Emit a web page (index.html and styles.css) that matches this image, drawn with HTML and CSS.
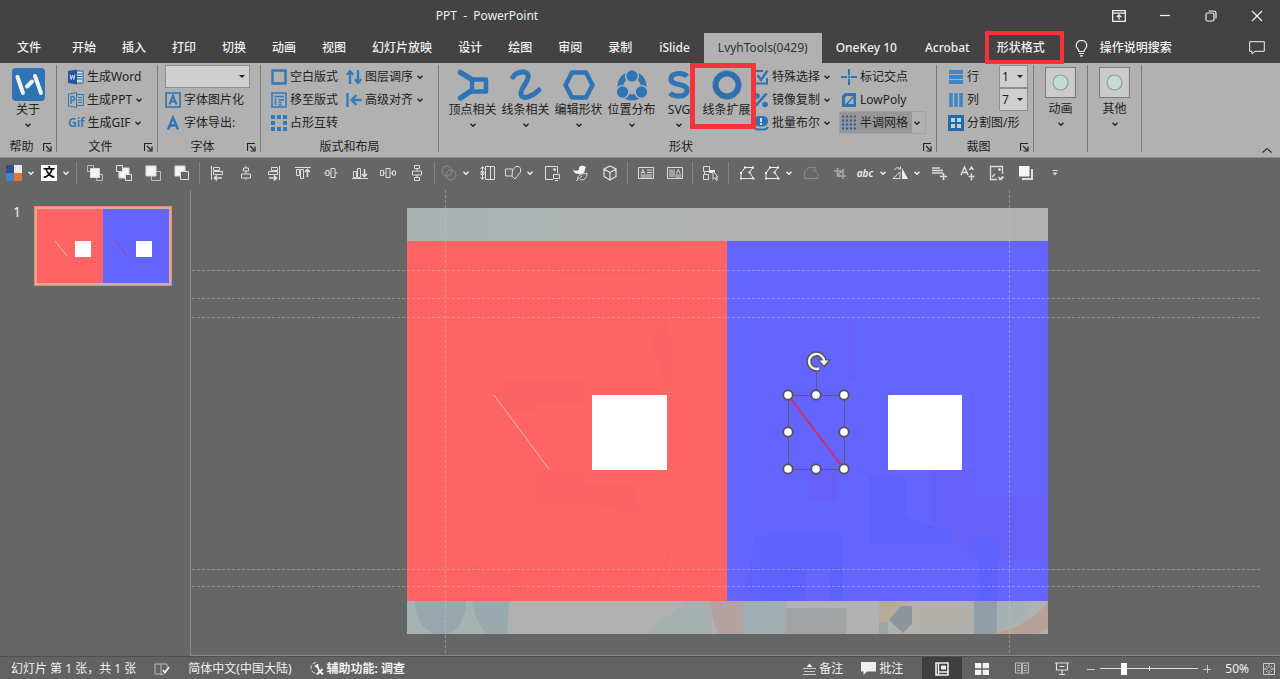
FILE: index.html
```html
<!DOCTYPE html>
<html lang="zh-CN">
  <head>
    <meta charset="UTF-8" />
    <meta name="viewport" content="width=device-width, initial-scale=1.0" />
    <title>PPT - PowerPoint</title>
    <link rel="stylesheet" href="styles.css" />
  </head>
  <body>
    <svg class="sprite" width="0" height="0" aria-hidden="true">
      <symbol id="caret" viewBox="0 0 8 8"><path d="M1.5 2.8 4 5.2l2.5-2.4" fill="none" stroke="currentColor" stroke-width="1.4" /></symbol>
      <symbol id="launcher" viewBox="0 0 9 9"><path d="M.5 8V.5H8M3 3l4 4M8 3.5V8H3.5" fill="none" stroke="currentColor" stroke-width="1.2" /></symbol>
      <symbol id="freeform" viewBox="0 0 16 16"><path d="M2 13.500V8l4-5.500h8L10.500 7l4 6.500z" fill="none" stroke="currentColor" /><path d="M1 12.500h2v2H1zM13 1.500h2v2h-2zM5 1.500h2v2H5zM13.500 12.500h2v2h-2zM1 7h2v2H1zM9.500 6.500h2v2h-2z" fill="currentColor" stroke="none" /></symbol>
      <symbol id="preview" viewBox="0 0 29 29"><path d="M.5.500h28v28H.5z" fill="#cbcbcb" stroke="#7c7c7c" /><circle cx="14.500" cy="14.500" r="7" fill="#c2dcd3" stroke="#7fa497" /></symbol>
    </svg>

    <header>
      <div class="title-bar">
        <h1>PPT&nbsp; -&nbsp; PowerPoint</h1>
        <div class="window-buttons">
          <button aria-label="功能区显示选项"><svg width="14" height="12" viewBox="0 0 14 12"><path d="M.7.700h12.600v10.600H.7zM.7 3.200h12.600M7 9.800V5M4.800 7 7 4.800 9.200 7" fill="none" stroke="currentColor" stroke-width="1.300" /></svg></button>
          <button aria-label="最小化"><svg width="12" height="12" viewBox="0 0 12 12"><path d="M1 5.500h10" stroke="currentColor" stroke-width="1.200" /></svg></button>
          <button aria-label="还原"><svg width="12" height="12" viewBox="0 0 12 12"><rect x="1" y="3" width="8" height="8" rx="1.500" fill="none" stroke="currentColor" stroke-width="1.200" /><path d="M3.500 1h5A2.500 2.500 0 0 1 11 3.500v5" fill="none" stroke="currentColor" stroke-width="1.200" /></svg></button>
          <button aria-label="关闭"><svg width="12" height="12" viewBox="0 0 12 12"><path d="m1 1 10 10M11 1 1 11" stroke="currentColor" stroke-width="1.200" /></svg></button>
        </div>
      </div>

      <nav class="tabs">
        <a href="#" class="tab-file">文件</a>
        <a href="#">开始</a>
        <a href="#">插入</a>
        <a href="#">打印</a>
        <a href="#">切换</a>
        <a href="#">动画</a>
        <a href="#">视图</a>
        <a href="#">幻灯片放映</a>
        <a href="#">设计</a>
        <a href="#">绘图</a>
        <a href="#">审阅</a>
        <a href="#">录制</a>
        <a href="#" class="tab-addin">iSlide</a>
        <a href="#" class="tab-addin active">LvyhTools(0429)</a>
        <a href="#" class="tab-addin">OneKey 10</a>
        <a href="#" class="tab-addin">Acrobat</a>
        <a href="#" class="tab-format">形状格式</a>
        <button class="search">
          <svg width="13" height="17" viewBox="0 0 13 17"><path d="M4 11.500C4 9 1.200 8.500 1.200 5.500a5.200 5 0 0 1 10.600 0C11.800 8.500 9 9 9 11.500zM4 13.500h5M5 15.800h3" fill="none" stroke="currentColor" stroke-width="1.200" /></svg>
          操作说明搜索
        </button>
        <button class="comment" aria-label="批注"><svg width="16" height="14" viewBox="0 0 16 14"><path d="M.7.700h14.600v9.600H6L3 13v-2.700H.7z" fill="none" stroke="currentColor" /></svg></button>
      </nav>
    </header>

    <section class="ribbon">
      <div class="group group-help">
        <div class="group-body">
          <button class="big">
            <svg width="33" height="33" viewBox="0 0 33 33"><rect width="33" height="33" rx="4" fill="#2e73b3" /><path d="m5.500 9 5.500 16M23 8l6 17M15 18.500l5-5" stroke="#f1f1f1" stroke-width="4" stroke-linecap="round" /></svg>
            <span>关于</span>
            <svg class="caret"><use href="#caret" /></svg>
          </button>
        </div>
        <div class="group-label"><span>帮助</span><button aria-label="帮助选项"><svg width="9" height="9"><use href="#launcher" /></svg></button></div>
      </div>

      <div class="group group-file">
        <div class="group-body">
          <div class="rows">
            <button>
              <svg width="16" height="16" viewBox="0 0 16 16"><path d="M8 2h7v12H8z" fill="#cfdcec" stroke="#2f5f9e" /><path d="M9 5h5M9 7.500h5M9 10h5" stroke="#2f5f9e" /><path d="m0 2 9-1.500v15L0 14z" fill="#2455a0" /><path d="m2 5.500 1.200 5L4.500 6l1.300 4.500L7 5.500" fill="none" stroke="#d8e2f0" /></svg>
              生成Word
            </button>
            <button>
              <svg width="16" height="16" viewBox="0 0 16 16" fill="none" stroke="#3478b4"><path d="M8.500 2.500h7v11h-7M10 5.500h4M10 8h4M10 10.500h4M.5 2l8-1.500v15l-8-1.500z" /><path d="M3 12V4.500h1.500a2 2 0 0 1 0 4H3" stroke-width="1.300" /></svg>
              生成PPT
              <svg class="caret"><use href="#caret" /></svg>
            </button>
            <button>
              <b class="gif">Gif</b>
              生成GIF
              <svg class="caret"><use href="#caret" /></svg>
            </button>
          </div>
        </div>
        <div class="group-label"><span>文件</span><button aria-label="文件选项"><svg width="9" height="9"><use href="#launcher" /></svg></button></div>
      </div>

      <div class="group group-font">
        <div class="group-body">
          <div class="rows">
            <label class="combo font-combo"><select aria-label="字体"><option></option></select></label>
            <button>
              <svg width="16" height="16" viewBox="0 0 16 16" fill="none" stroke="#2e73b3"><path d="M1 1h14v14H1z" stroke-width="1.600" /><path d="m4.500 12.500 3.500-9 3.500 9M5.600 9.500h4.800" stroke-width="1.900" /></svg>
              字体图片化
            </button>
            <button>
              <svg width="16" height="16" viewBox="0 0 16 16" fill="none" stroke="#2e73b3"><path d="M3 14.500 8 2.500l5 12M4.800 10.500h6.400" stroke-width="2.300" /></svg>
              字体导出:
            </button>
          </div>
        </div>
        <div class="group-label"><span>字体</span><button aria-label="字体选项"><svg width="9" height="9"><use href="#launcher" /></svg></button></div>
      </div>

      <div class="group group-layout">
        <div class="group-body">
          <div class="rows">
            <button>
              <svg width="16" height="16" viewBox="0 0 16 16"><path d="M1.500 1.500h13v13h-13z" fill="none" stroke="#2e7bbd" stroke-width="2.400" /></svg>
              空白版式
            </button>
            <button>
              <svg width="16" height="16" viewBox="0 0 16 16" fill="none" stroke="#2e7bbd"><path d="M1 1h14v14H1zM3 4.500h10M4.500 6.500V13M7.500 8H13M7.500 10.500h3M7.500 13h3" stroke-width="1.500" /></svg>
              移至版式
            </button>
            <button>
              <svg width="16" height="16" viewBox="0 0 16 16"><path d="M0 0h4v4H0zM6 0h4v4H6zM12 0h4v4h-4zM0 6h4v4H0zM12 6h4v4h-4zM0 12h4v4H0zM6 12h4v4H6zM12 12h4v4h-4z" fill="#2e7bbd" /></svg>
              占形互转
            </button>
          </div>
          <div class="rows">
            <button>
              <svg width="16" height="16" viewBox="0 0 16 16" fill="none" stroke="#2e7bbd" stroke-width="2.300"><path d="M4 15V2.500M.8 5.800 4 2.200l3.200 3.600M12 1v12.500M8.800 10.200l3.200 3.600 3.200-3.600" /></svg>
              图层调序
              <svg class="caret"><use href="#caret" /></svg>
            </button>
            <button>
              <svg width="16" height="16" viewBox="0 0 16 16" fill="none" stroke="#2e7bbd" stroke-width="2.300"><path d="M1.500 1v14M15.500 8H6M10.500 3 5.500 8l5 5" /></svg>
              高级对齐
              <svg class="caret"><use href="#caret" /></svg>
            </button>
          </div>
        </div>
        <div class="group-label"><span>版式和布局</span></div>
      </div>

      <div class="group group-shape">
        <div class="group-body">
          <button class="big">
            <svg width="32" height="33" viewBox="0 0 32 33" fill="none" stroke="#2f74b5"><path d="M15 11.500h14v12H15z" stroke-width="4.500" stroke-linejoin="round" /><path d="M3.500 4.500 14 11M3.500 30l10.500-7" stroke-width="5.500" stroke-linecap="round" /></svg>
            <span>顶点相关</span>
            <svg class="caret"><use href="#caret" /></svg>
          </button>
          <button class="big">
            <svg width="32" height="33" viewBox="0 0 32 33"><path d="M3 9c3-5 13-7 15-2 2 6-8 13-7 19 1 7 12 2 18-4" fill="none" stroke="#2f74b5" stroke-width="5" stroke-linecap="round" /></svg>
            <span>线条相关</span>
            <svg class="caret"><use href="#caret" /></svg>
          </button>
          <button class="big">
            <svg width="32" height="33" viewBox="0 0 32 33"><path d="M9 4.500h14l6.500 12.500-6.500 12.500H9L2.500 17z" fill="none" stroke="#2f74b5" stroke-width="4.500" stroke-linejoin="round" /></svg>
            <span>编辑形状</span>
            <svg class="caret"><use href="#caret" /></svg>
          </button>
          <button class="big">
            <svg width="32" height="33" viewBox="0 0 32 33"><circle cx="16" cy="18" r="11.500" fill="none" stroke="#2f74b5" stroke-width="6" /><g fill="#2f74b5" stroke="#b1b1b1" stroke-width="1.500"><circle cx="16" cy="8" r="6.400" /><circle cx="6.500" cy="24" r="6.400" /><circle cx="25.500" cy="24" r="6.400" /></g></svg>
            <span>位置分布</span>
            <svg class="caret"><use href="#caret" /></svg>
          </button>
          <button class="big big-narrow">
            <svg width="24" height="33" viewBox="0 0 24 33"><path d="M20 8.500c-1.500-2-4.500-3-8-3-5 0-8 2-8 5.500 0 3.800 3.500 4.700 8 5.500 5 .9 8 2 8 6 0 3.500-3.500 5.500-8 5.500-4 0-7-1-9-3" fill="none" stroke="#2f74b5" stroke-width="5" /></svg>
            <span>SVG</span>
            <svg class="caret"><use href="#caret" /></svg>
          </button>
          <button class="big big-marked">
            <svg width="32" height="33" viewBox="0 0 32 33"><circle cx="16" cy="17" r="11.500" fill="none" stroke="#2f6fac" stroke-width="6" /><circle cx="16" cy="17" r="14.300" fill="none" stroke="#6c93b8" stroke-dasharray="5 2.500" /></svg>
            <span>线条扩展</span>
          </button>
          <div class="rows">
            <button>
              <svg width="16" height="16" viewBox="0 0 16 16" fill="none" stroke="#2e73b3"><path d="M10 2H2v12.500h12V9" stroke-width="2" /><path d="m4.500 6 3.500 5 6.500-9.500" stroke-width="2.400" /></svg>
              特殊选择
              <svg class="caret"><use href="#caret" /></svg>
            </button>
            <button>
              <svg width="16" height="16" viewBox="0 0 16 16" fill="none" stroke="#2e73b3"><path d="M13.500 1.500 2 14.500" stroke-width="2.600" /><circle cx="4" cy="4" r="2.800" fill="#2e73b3" stroke="none" /><circle cx="12" cy="12.500" r="2.800" fill="#2e73b3" stroke="none" /></svg>
              镜像复制
              <svg class="caret"><use href="#caret" /></svg>
            </button>
            <button>
              <svg width="16" height="16" viewBox="0 0 16 16"><rect x="1" y="1" width="14" height="10.500" rx="5" fill="#2e73b3" /><path d="M8 3v4M8 8v2" stroke="#d5dde5" stroke-width="2" /><path d="M1 12c1 2 2 2.500 4 2.500h6c2 0 3-.5 4-2.500" fill="none" stroke="#2e73b3" stroke-width="1.800" /></svg>
              批量布尔
              <svg class="caret"><use href="#caret" /></svg>
            </button>
          </div>
          <div class="rows rows-right">
            <button>
              <svg width="16" height="16" viewBox="0 0 16 16"><path d="M8 0v6M8 10v6M0 8h6M10 8h6" stroke="#2e73b3" stroke-width="2" /><circle cx="8" cy="8" r="1.300" fill="#2e73b3" /></svg>
              标记交点
            </button>
            <button>
              <svg width="16" height="16" viewBox="0 0 16 16"><path d="M4 1h11v14H1V4z" fill="#2e73b3" /><path d="M4 12.500V6l1.500-2H12zM12.500 5.500V12H7z" fill="#b1b1b1" /></svg>
              LowPoly
            </button>
            <div class="split-toggle">
              <button>
                <svg width="16" height="16" viewBox="0 0 16 16"><path d="M1 1.500h15M1 5.500h15M1 9.500h15M1 13.500h15" stroke="#2c5f9b" stroke-width="2.200" stroke-dasharray="2.200 1.700" /></svg>
                半调网格
              </button>
              <button aria-label="半调网格选项"><svg class="caret"><use href="#caret" /></svg></button>
            </div>
          </div>
        </div>
        <div class="group-label"><span>形状</span><button aria-label="形状选项"><svg width="9" height="9"><use href="#launcher" /></svg></button></div>
      </div>

      <div class="group group-crop">
        <div class="group-body">
          <div class="rows">
            <div class="field">
              <svg width="16" height="16" viewBox="0 0 16 16"><path d="M1 3h14M1 8h14M1 13h14" stroke="#3f86c4" stroke-width="4" /></svg>
              <label for="rowCount">行</label>
              <span class="combo"><select id="rowCount"><option>1</option></select></span>
            </div>
            <div class="field">
              <svg width="16" height="16" viewBox="0 0 16 16"><path d="M3 1v14M8 1v14M13 1v14" stroke="#3f86c4" stroke-width="3.600" /></svg>
              <label for="colCount">列</label>
              <span class="combo"><select id="colCount"><option>7</option></select></span>
            </div>
            <button>
              <svg width="16" height="16" viewBox="0 0 16 16"><path d="M0 0h16v16H0z" fill="#2569a8" /><path d="M3 3h4v4H3zM9 3h4v4H9zM3 9h4v4H3zM9 9h4v4H9z" fill="#c3d2e0" /></svg>
              分割图/形
            </button>
          </div>
        </div>
        <div class="group-label"><span>裁图</span><button aria-label="裁图选项"><svg width="9" height="9"><use href="#launcher" /></svg></button></div>
      </div>

      <div class="group group-menu">
        <button class="big">
          <svg width="31" height="31"><use href="#preview" /></svg>
          <span>动画</span>
          <svg class="caret"><use href="#caret" /></svg>
        </button>
      </div>
      <div class="group group-menu">
        <button class="big">
          <svg width="31" height="31"><use href="#preview" /></svg>
          <span>其他</span>
          <svg class="caret"><use href="#caret" /></svg>
        </button>
      </div>
      <button class="collapse" aria-label="折叠功能区"><svg width="12" height="8" viewBox="0 0 12 8"><path d="m1.500 6.500 4.500-4 4.500 4" fill="none" stroke="#333" stroke-width="1.200" /></svg></button>
    </section>

    <section class="quick-bar">
      <div class="quick-group">
        <button class="split" aria-label="主题颜色"><svg class="icon" viewBox="0 0 16 16" stroke="none"><g stroke="none"><path d="M0 0h8v8H0z" fill="#2c4f8f" /><path d="M8 0h8v8H8z" fill="#e9e9e9" /><path d="M0 8h8v8H0z" fill="#4a80c8" /><path d="M8 8h8v8H8z" fill="#e07830" /></g></svg><svg class="caret"><use href="#caret" /></svg></button>
        <button class="split" aria-label="字体"><span class="wen">文</span><svg class="caret"><use href="#caret" /></svg></button>
      </div>
      <i class="sep"></i>
      <div class="quick-group">
        <button aria-label="置于顶层"><svg class="icon" viewBox="0 0 16 16"><path d="M.5.500h6v6h-6zM9.500 9.500h6v6h-6z" stroke="#bdbdbd" /><path d="M3.500 3.500h9v9h-9z" fill="#f4f4f4" /></svg></button>
        <button aria-label="置于底层"><svg class="icon" viewBox="0 0 16 16"><path d="M3 3h10v10H3z" fill="#f4f4f4" /><path d="M.5.500h6v6h-6zM9.500 9.500h6v6h-6z" fill="#666" stroke="#dedede" /></svg></button>
        <button aria-label="上移一层"><svg class="icon" viewBox="0 0 16 16"><path d="M6.500 6.500h9v9h-9z" stroke="#bdbdbd" /><path d="M1 1h10v10H1z" fill="#f4f4f4" /></svg></button>
        <button aria-label="下移一层"><svg class="icon" viewBox="0 0 16 16"><path d="M1 1h10v10H1z" fill="#f4f4f4" /><path d="M6.500 6.500h8v8h-8z" fill="#666" stroke="#dedede" /></svg></button>
      </div>
      <i class="sep"></i>
      <div class="quick-group quick-align">
        <button aria-label="左对齐"><svg class="icon" viewBox="0 0 16 16"><path d="M2.500 1v14M4.500 2.500h6v3h-6zM4.500 6.500h9v3h-9z" /><path d="M13 13H5.500M8 10.500 5.500 13 8 15.500" stroke-width="1.600" /></svg></button>
        <button aria-label="水平居中"><svg class="icon" viewBox="0 0 16 16"><path d="M8 1v2M8 6v3M8 13v2M5.500 3h5v3h-5zM3.500 9h9v4h-9z" /></svg></button>
        <button aria-label="右对齐"><svg class="icon" viewBox="0 0 16 16"><path d="M13.500 1v14M5.500 2.500h6v3h-6zM2.500 6.500h9v3h-9z" /><path d="M3 13h7.500M8 10.500l2.500 2.500L8 15.500" stroke-width="1.600" /></svg></button>
        <button aria-label="顶端对齐"><svg class="icon" viewBox="0 0 16 16"><path d="M0 2.500h16M1.500 4.500h3v6h-3zM5.500 4.500h3v9h-3z" /><path d="M12.500 12V4.500M10 7l2.500-2.500L15 7" stroke-width="1.600" /></svg></button>
        <button aria-label="垂直居中"><svg class="icon" viewBox="0 0 16 16"><path d="M1 8h2M6 8h2M12 8h2.500M3 5.500h3v5H3zM8 3.500h4v9H8z" /></svg></button>
        <button aria-label="底端对齐"><svg class="icon" viewBox="0 0 16 16"><path d="M0 13.500h16M1.500 6.500h3v6h-3zM5.500 3.500h3v9h-3z" /><path d="M12.500 4v7.500M10 9l2.500 2.500L15 9" stroke-width="1.600" /></svg></button>
        <button aria-label="横向分布"><svg class="icon" viewBox="0 0 16 16"><path d="M.5 5.500h3v5h-3zM6 3.500h4v9H6zM12.500 6h3v4h-3zM3.500 8H6M10 8h2.500" /></svg></button>
        <button aria-label="纵向分布"><svg class="icon" viewBox="0 0 16 16"><path d="M5.500.500h5v3h-5zM3.500 6h9v4h-9zM5.500 12.500h5v3h-5zM8 3.500V6M8 10v2.500" /></svg></button>
      </div>
      <i class="sep"></i>
      <div class="quick-group">
        <button class="split faded" aria-label="合并形状"><svg class="icon" viewBox="0 0 16 16"><circle cx="6" cy="6" r="5" /><circle cx="10" cy="10" r="5" /></svg><svg class="caret"><use href="#caret" /></svg></button>
        <button aria-label="大小"><svg class="icon" viewBox="0 0 16 16"><path d="M5.500 1.500h9v13h-9zM10.500 1.500v13M2.500 2v12M.5 4l2-2.500 2 2.500M.5 12l2 2.500 2-2.500M1 6.500h3v3H1z" /></svg></button>
        <button class="split" aria-label="形状"><svg class="icon" viewBox="0 0 16 16"><path d="M.5 4h7v7h-7z" /><path d="M7.500 5 11 1.500h3l1.500 2V7l-5.500 7-3-3z" fill="#666" /></svg><svg class="caret"><use href="#caret" /></svg></button>
        <button aria-label="图片"><svg class="icon" viewBox="0 0 16 16"><path d="M9 14.500H1.500v-13h12V8M9.500 9.500h6v4h-6zM11 15.500h3" /><circle cx="10.500" cy="4.500" r="1" fill="#ddd" /></svg></button>
        <button aria-label="图标"><svg class="icon" viewBox="0 0 16 16"><path d="M0 5c2 1 4 1 6 0-1-3 2-5 5-4l2 1-1 2c0 4-3 6-6 5C3 9 1 8 0 5z" fill="#f4f4f4" stroke="none" /><path d="M4.500 14c0-4 4-5 9.500-6 0 5-3 8-7 6.500M3 16l6-5" /></svg></button>
        <button aria-label="三维模型"><svg class="icon" viewBox="0 0 16 16"><path d="m8 1 6 3v7.500L8 15l-6-3.500V4zM2 4l6 3.500L14 4M8 7.500V15" stroke-width="1.300" /></svg></button>
      </div>
      <i class="sep"></i>
      <div class="quick-group">
        <button aria-label="文本框"><svg class="icon" viewBox="0 0 16 16"><path d="M.5 2.500h15v11H.5zM9 5h5M9 7.500h5M2.500 10h11.500M2.500 12h11.500M3 8.500l1.800-4 1.800 4M3.500 7.500H6" /></svg></button>
        <button aria-label="竖排文本框"><svg class="icon" viewBox="0 0 16 16"><path d="M.5 2.500h15v11H.5zM3 4.500v7.500M5 4.500v7.500M7 4.500v7.500M8.500 10H14M8.500 12H14M9.500 8.500l1.800-4 1.800 4" /></svg></button>
      </div>
      <i class="sep"></i>
      <div class="quick-group">
        <button aria-label="选择窗格"><svg class="icon" viewBox="0 0 16 16"><path d="M.5 1.500h6v5h-6zM.5 9.500h5v5h-5zM1.500 6.500v3" /><path d="M6 5h6v3H6z" fill="#eee" stroke="none" /><path d="M10 6v8.500l2-2 1.500 3 1-.5-1.200-3H15z" fill="#666" /></svg></button>
      </div>
      <i class="sep"></i>
      <div class="quick-group">
        <button aria-label="编辑顶点"><svg class="icon"><use href="#freeform" /></svg></button>
        <button class="split" aria-label="任意多边形"><svg class="icon"><use href="#freeform" /></svg><svg class="caret"><use href="#caret" /></svg></button>
        <button class="faded" aria-label="更改形状"><svg class="icon" viewBox="0 0 16 16"><path d="M1.500 13.500V7l4-4.500h7L10.500 6c4 .5 5.500 3 4 7.500z" /></svg></button>
        <button class="muted" aria-label="裁剪"><svg class="icon" viewBox="0 0 16 16"><path d="M5.500 3v8H14M2 6h9v8M5 11l7-7" stroke-width="1.500" /></svg></button>
        <button class="split" aria-label="替换字体"><em class="abc">abc</em><svg class="caret"><use href="#caret" /></svg></button>
        <button class="split" aria-label="旋转"><svg class="icon" viewBox="0 0 16 16"><path d="M10 3v11h6z" fill="#eee" stroke="none" /><path d="M8 7v6.500H1L8 7M2.500 5c1-2.500 4-3 6-1M8.500 1.500V4H6" /></svg><svg class="caret"><use href="#caret" /></svg></button>
        <button aria-label="添加段落"><svg class="icon" viewBox="0 0 16 16"><path d="M1 3h8M1 5.500h11M1 8h11M9 11.500h7M12.500 8v7" stroke-width="1.600" /></svg></button>
        <button aria-label="增大字号"><svg class="icon" viewBox="0 0 16 16"><path d="m1 10 3.500-8L8 10M2.500 7.500h4M8.500 11.500h6M11.500 8.500v7M9.500 5l2-3 2 3" stroke-width="1.500" /></svg></button>
        <button aria-label="更改图片"><svg class="icon" viewBox="0 0 16 16"><path d="M8 14.500H1.500v-13h12V9M3 12l3-3M10 15l4-3.500M9 12l3 2.500 2.500-3" stroke-width="1.300" /><circle cx="10.500" cy="4.500" r="1" fill="#eee" /></svg></button>
        <button aria-label="阴影"><svg class="icon" viewBox="0 0 16 16"><path d="M1 1h10.500v10.500H1z" fill="#f6f6f6" stroke="none" /><path d="M14 4v10H4" stroke-width="2" /></svg></button>
        <button aria-label="自定义快速访问工具栏"><svg class="icon" viewBox="0 0 16 16"><path d="M5.500 5.500h5" /><path d="M5.500 7.500h5L8 10.500z" fill="#ddd" stroke="none" /></svg></button>
      </div>
    </section>

    <main>
      <aside class="slides">
        <span class="slide-number">1</span>
        <a href="#" class="thumb" aria-label="幻灯片 1">
          <svg viewBox="0 0 132 74" preserveAspectRatio="none">
            <path d="M0 0h66v74H0z" fill="#ff6464" />
            <path d="M66 0h66v74H66z" fill="#6464ff" />
            <path d="M38 32h16v16H38zM99 32h16v16H99z" fill="#fff" />
            <path d="m18 32 12 15" stroke="#eebbb5" />
            <path d="m79 32 11 15" stroke="#b03c90" />
          </svg>
        </a>
      </aside>

      <div class="canvas">
        <div class="slide">
          <svg viewBox="0 0 641 426">
            <linearGradient id="sky">
              <stop offset="0" stop-color="#a9b3b2" />
              <stop offset=".5" stop-color="#b1b1b1" />
            </linearGradient>
            <path d="M0 0h641v426H0z" fill="#b1b1b1" />
            <path d="M0 0h641v33H0z" fill="url(#sky)" />
            <path d="M0 393h102v33H0z" fill="#a7b2b3" />
            <path d="M8 393h51c0 18-8 30-20 33H27C15 420 8 410 8 393z" fill="#98a7ac" />
            <path d="M65 393h37l-2 33H80c-8-8-13-19-15-33z" fill="#9ba9ae" />
            <path d="m238 426 42-33h25v33z" fill="#a6b0b0" />
            <path d="M304 393h32v33h-24c-6-10-8-20-8-33z" fill="#b5a1a1" />
            <path d="M336 393h43v33h-43z" fill="#a1aeb1" />
            <path d="M379 400h60v26h-60z" fill="#a1a5a6" />
            <path d="M472 393h30l-18 20-12 2z" fill="#b7aa98" />
            <path d="M472 414h9v12h-9z" fill="#9ba6aa" />
            <path d="m482 412 12-14h11v18l-9 9z" fill="#8f969b" />
            <path d="M506 397h60v29h-60z" fill="#b3b0aa" />
            <path d="M567 393h23v33h-23z" fill="#929da8" />
            <path d="M590 393h36c-8 16-20 27-36 31z" fill="#a8b1b1" />
            <path d="M585 426c28-5 45-17 56-33v27l-10 6z" fill="#b7a198" />
            <path d="M0 33h321v360H0z" fill="#ff6464" />
            <path d="M320 33h321v360H320z" fill="#6464ff" />
            <g fill="#a03c50" opacity=".04">
              <path d="M96 172h82v24h-50v66h50v32h-50v-90H96zM178 275h50l4 30-54-9zM244 135l14-23 8 28-3 46z" />
              <path d="M150 62h95v6h-95zM54 350c28 16 50 6 66 32l-40-3zM230 390c24-20 28-40 32-50v20l-20 30z" />
              <circle cx="190" cy="85" r="45" fill="none" stroke="#a03c50" />
            </g>
            <g opacity=".06">
              <path d="M440 112h10v60h-10zM525 262h45v26h71v64h-74l-42-40zM402 262h28v30h-30z" fill="#642896" />
              <path d="M462 268h36v40l46 16v12h-82zM348 327h88v66h-12v-32h-26v32h-62zM567 330h24v63h-18v-25z" fill="#0050ff" />
            </g>
            <path d="m87 187 55 74" stroke="#f2bcb4" />
            <path d="M185 187h75v75h-75zM481 187h74v75h-74z" fill="#fff" />
            <path d="m381 187 56 74" stroke="#dc2850" stroke-width="1.600" />
            <path d="M381.500 187.500h56v74h-56zM409.500 163v24" fill="none" stroke="#5a5a78" />
            <g fill="#fff" stroke="#56565e" stroke-width="2">
              <circle cx="381" cy="187" r="4.800" /><circle cx="409" cy="187" r="4.800" /><circle cx="437" cy="187" r="4.800" />
              <circle cx="381" cy="224" r="4.800" /><circle cx="437" cy="224" r="4.800" />
              <circle cx="381" cy="261" r="4.800" /><circle cx="409" cy="261" r="4.800" /><circle cx="437" cy="261" r="4.800" />
            </g>
            <g fill="none" stroke="#555560" stroke-width="5.500"><path d="M412 160.500a7.500 7.500 0 1 1 5-7.500" /><path d="M413.500 153h7.500l-3.700 4.500z" stroke-width="3" /></g>
            <path d="M412 160.500a7.500 7.500 0 1 1 5-7.500" fill="none" stroke="#f3f3e6" stroke-width="2.400" />
            <path d="M412.500 152.500h9l-4.500 5z" fill="#f3f3e6" />
          </svg>
          <i class="guide-v guide-left"></i>
          <i class="guide-v guide-right"></i>
        </div>
        <i class="guide-h guide-1"></i>
        <i class="guide-h guide-2"></i>
        <i class="guide-h guide-3"></i>
        <i class="guide-h guide-4"></i>
        <i class="guide-h guide-5"></i>
      </div>
    </main>

    <footer>
      <span>幻灯片 第 1 张，共 1 张</span>
      <button aria-label="拼写检查"><svg width="16" height="14" viewBox="0 0 16 14"><path d="M7 2v11M7 2H1v10h5l1 1 1-1h2M7 2h6v3" fill="none" stroke="#bbb" /><path d="m9 8 2 2.500L15 5" fill="none" stroke="#eee" stroke-width="1.800" /></svg></button>
      <button>简体中文(中国大陆)</button>
      <button class="access">
        <svg width="15" height="15" viewBox="0 0 15 15"><path d="M6 1.500a5.500 5.500 0 1 0 1 11" fill="none" stroke="#ddd" stroke-dasharray="4 1.500" /><path d="M5 4.500l3 2 1 3 4 4M12.500 8 7 13.500M7.500 3v4" fill="none" stroke="#f2f2f2" stroke-width="1.800" /></svg>
        辅助功能: 调查
      </button>
      <div class="status-right">
        <button><svg width="13" height="12" viewBox="0 0 13 12"><path d="M0 5.500h13M1 8.500h11M0 11.500h13" stroke="#ccc" /><path d="m3.500 4 3-3.500 3 3.500z" fill="#eee" /></svg>备注</button>
        <button class="notes"><svg width="15" height="13" viewBox="0 0 15 13"><path d="M0 0h15v9.500H6L2.500 13V9.500H0z" fill="#eee" /></svg>批注</button>
        <div class="views">
          <button class="current" aria-label="普通视图"><svg width="14" height="14" viewBox="0 0 14 14"><path d="M1 1h12v12H1z" fill="none" stroke="#eee" stroke-width="1.600" /><path d="M3.500 1v12M3.500 10H13" stroke="#eee" stroke-width="1.400" /><path d="M6 3.500h5v4H6z" fill="#eee" /></svg></button>
          <button aria-label="幻灯片浏览"><svg width="14" height="12" viewBox="0 0 14 12"><path d="M0 0h6.300v5.300H0zM7.700 0H14v5.300H7.700zM0 6.700h6.300V12H0zM7.700 6.700H14V12H7.700z" fill="#f2f2f2" /></svg></button>
          <button aria-label="阅读视图"><svg width="14" height="13" viewBox="0 0 14 13"><path d="M.5 1h6v10h-6zM7.500 1h6v10h-6zM7 1v11.500M2 3.500h3M2 6h3M2 8.500h3M9 3.500h3M9 6h3M9 8.500h3" fill="none" stroke="#bdbdbd" /></svg></button>
          <button aria-label="幻灯片放映"><svg width="14" height="13" viewBox="0 0 14 13"><path d="M0 1h14M1.500 1v7h11V1M7 8v4.500M4 12.500h6M4.500 4.500h5" fill="none" stroke="#ddd" stroke-width="1.200" /></svg></button>
        </div>
        <button class="zoom-step" aria-label="缩小"><svg width="8" height="8" viewBox="0 0 8 8"><path d="M0 4.500h8" stroke="#ccc" /></svg></button>
        <input type="range" min="0" max="100" value="23" aria-label="显示比例" />
        <button class="zoom-step" aria-label="放大"><svg width="8" height="8" viewBox="0 0 8 8"><path d="M0 4.500h8M4.500 0v8" stroke="#ccc" /></svg></button>
        <button class="percent">50%</button>
        <button aria-label="适应窗口"><svg width="12" height="12" viewBox="0 0 12 12"><path d="M.5.500h11v11H.5zM6 1v3.500M6 11V7.500M1 6h3.500M11 6H7.500M3 3l1.500 1.500M9 3 7.500 4.500M3 9l1.500-1.500M9 9 7.500 7.500" fill="none" stroke="#ccc" /></svg></button>
      </div>
    </footer>
  </body>
</html>
```
FILE: styles.css
```css
* {
  box-sizing: border-box;
}

body {
  display: flex;
  flex-direction: column;
  min-height: 100vh;
  margin: 0;
  background-color: #666;
  color: #f0f0f0;
  font-family: "Noto Sans", "Noto Sans CJK SC", sans-serif;
  font-size: 12px;
  line-height: 16px;
}

button,
select {
  margin: 0;
  padding: 0;
  border: none;
  background: none;
  color: inherit;
  font: inherit;
  white-space: nowrap;
}

a {
  color: inherit;
  text-decoration: none;
}

svg {
  flex: none;
}

.sprite {
  position: absolute;
}

.caret {
  width: 8px;
  height: 8px;
}

/* Title bar and tabs */

header {
  background-color: #434343;
}

.title-bar {
  display: flex;
  height: 33px;
}

.title-bar h1 {
  flex: 1;
  margin: 0;
  padding-right: 122px;
  font-size: 12px;
  font-weight: 400;
  line-height: 32px;
  text-align: center;
}

.window-buttons {
  display: flex;
}

.window-buttons button {
  width: 46px;
  height: 30px;
}

.window-buttons svg {
  vertical-align: middle;
}

.tabs {
  display: flex;
  height: 30px;
  font-weight: 500;
  white-space: nowrap;
}

.tabs a {
  padding: 0 13px;
  line-height: 29px;
}

.tabs .tab-file {
  padding: 0 18px 0 17px;
}

.tabs .tab-addin {
  padding: 0 14px;
}

.tabs .active {
  background-color: #b1b1b1;
  color: #333;
  font-weight: 400;
}

.tabs .tab-format {
  position: relative;
}

.tab-format::after {
  content: "";
  position: absolute;
  top: -2px;
  right: -6px;
  bottom: -1px;
  left: 1px;
  border: 4px solid #f5333a;
}

.search {
  display: flex;
  align-items: center;
  gap: 12px;
  margin-left: 17px;
}

.comment {
  display: flex;
  align-items: center;
  margin-left: auto;
  padding-right: 15px;
}

/* Ribbon */

.ribbon {
  display: flex;
  height: 94px;
  padding-top: 2px;
  background-color: #b1b1b1;
  color: #222;
}

.group {
  display: flex;
  flex-direction: column;
  height: 87px;
  border-right: 1px solid #7a7a7a;
}

.group-help {
  width: 57px;
}

.group-file {
  width: 101px;
}

.group-file .group-body {
  padding-left: 11px;
}

.group-font {
  width: 103px;
}

.group-font .group-body {
  padding-left: 7px;
}

.group-layout {
  width: 178px;
}

.group-layout .group-body {
  padding-left: 10px;
}

.group-shape {
  width: 498px;
}

.group-shape .group-body {
  padding-left: 7px;
}

.group-crop {
  width: 97px;
}

.group-crop .group-body {
  padding-left: 11px;
}

.group-menu {
  width: 54px;
}

.group-body {
  display: flex;
  flex: none;
  height: 70px;
}

.group-label {
  display: flex;
  flex: none;
  align-items: center;
  height: 24px;
}

.group-label span {
  flex: 1;
  text-align: center;
}

.group-label button {
  width: 13px;
  line-height: 0;
  text-align: left;
}

.rows {
  display: grid;
  grid-template-rows: repeat(3, 23px);
  justify-items: start;
}

.rows button,
.field {
  display: flex;
  align-items: center;
  gap: 3px;
}

.group-layout .rows {
  width: 75px;
}

.gif {
  color: #2e73b3;
  font-weight: 600;
}

.big {
  display: flex;
  flex-direction: column;
  align-items: center;
  width: 53px;
  padding-top: 3px;
}

.big span {
  margin-top: 1px;
}

.big .caret {
  margin-top: 3px;
}

.group-help .big {
  width: 100%;
}

.group-menu .big {
  padding-top: 2px;
}

.group-menu span {
  margin-top: 3px;
}

.big-narrow {
  width: 42px;
}

.big-marked {
  position: relative;
}

.big-marked::after {
  content: "";
  position: absolute;
  top: -2px;
  right: -3px;
  bottom: 6px;
  left: -10px;
  border: 5px solid #f5333a;
}

.group-shape .rows {
  width: 86px;
}

.group-shape .rows-right {
  width: 90px;
}

.rows-right > button {
  padding-left: 2px;
}

.split-toggle {
  display: flex;
  border: 1px solid #a2a2a2;
}

.split-toggle button {
  padding: 0 4px 0 1px;
}

.split-toggle button:first-child {
  background-color: #979797;
}

.combo {
  position: relative;
  align-self: stretch;
}

.combo::after {
  content: "";
  position: absolute;
  top: 10px;
  right: 5px;
  border: 3px solid transparent;
  border-top-color: #222;
  border-bottom: none;
}

.combo select {
  width: 29px;
  height: 23px;
  padding-left: 2px;
  border: 1px solid #8f8f8f;
  background-color: #cfcfcf;
  color: #222;
  appearance: none;
}

.combo.font-combo select {
  width: 85px;
}

.field label {
  width: 29px;
}

.collapse {
  align-self: flex-end;
  margin-left: auto;
  padding: 0 7px 3px;
  line-height: 0;
}

/* Quick access toolbar */

.quick-bar {
  display: flex;
  align-items: center;
  height: 33px;
  padding: 0 0 2px 3px;
  border-top: 1px solid #8a8a8a;
}

.quick-group {
  display: flex;
  flex: none;
}

.quick-group button {
  display: flex;
  flex: none;
  align-items: center;
  justify-content: center;
  width: 29px;
  height: 24px;
}

.quick-group .split {
  gap: 5px;
  width: 35px;
}

.quick-align {
  width: 228px;
}

.quick-align button {
  flex: 1;
}

.icon {
  width: 16px;
  height: 16px;
  fill: none;
  stroke: #dcdcdc;
}

.faded .icon {
  stroke: #8c8c8c;
}

.muted .icon {
  stroke: #ababab;
}

.wen {
  width: 16px;
  height: 16px;
  background-color: #fff;
  color: #000;
  font-weight: 700;
}

.abc {
  width: 18px;
  font-size: 10px;
  font-weight: 600;
}

.sep {
  width: 1px;
  height: 22px;
  margin: 0 3px;
  background-color: #858585;
}

/* Workspace */

main {
  display: flex;
  flex: 1;
}

.slides {
  display: flex;
  gap: 13px;
  width: 191px;
  padding: 14px 0 0 13px;
  border-right: 1px solid #8a8a8a;
}

.slide-number {
  width: 8px;
  font-size: 14px;
}

.thumb {
  width: 138px;
  height: 80px;
  margin-top: 2px;
  border: 1px solid #ee8a68;
  padding: 2px;
  background-color: #dcab98;
}

.thumb svg {
  display: block;
  width: 100%;
  height: 100%;
}

.canvas {
  position: relative;
  display: flex;
  flex: 1;
  align-items: flex-start;
  justify-content: center;
  padding: 18px 16px 21px 0;
  border-bottom: 1px solid #8a8a8a;
}

.slide {
  position: relative;
  width: 641px;
}

.slide svg {
  display: block;
  width: 100%;
}

.guide-h,
.guide-v {
  position: absolute;
  opacity: 0.45;
}

.guide-h {
  right: 18px;
  left: 1px;
  height: 1px;
  background: repeating-linear-gradient(90deg, #c4c4c4 0 3px, transparent 3px 5px);
}

.guide-v {
  top: -18px;
  bottom: -21px;
  width: 1px;
  background: repeating-linear-gradient(#c4c4c4 0 3px, transparent 3px 5px);
}

.guide-left {
  left: 38px;
}

.guide-right {
  right: 38px;
}

.guide-1 {
  top: 80px;
}

.guide-2 {
  top: 108px;
}

.guide-3 {
  top: 127px;
}

.guide-4 {
  top: 379px;
}

.guide-5 {
  top: 396px;
}

/* Status bar */

footer {
  display: flex;
  align-items: center;
  gap: 18px;
  height: 24px;
  padding: 0 5px 0 11px;
  border-top: 1px solid #4e4e4e;
  background-color: #626262;
  white-space: nowrap;
}

footer button {
  display: flex;
  align-items: center;
  gap: 3px;
}

footer .access {
  gap: 2px;
  font-weight: 600;
}

.status-right {
  display: flex;
  align-items: center;
  margin-left: auto;
}

.status-right .notes {
  margin: 0 19px 0 18px;
}

.views {
  display: flex;
}

.views button {
  justify-content: center;
  width: 40px;
  height: 23px;
}

.views .current {
  background-color: #3f3f3f;
}

.zoom-step {
  margin: 0 5px;
}

input[type="range"] {
  width: 98px;
  height: 12px;
  margin: 0;
  background:
    linear-gradient(#ddd, #ddd) center / 1px 5px no-repeat,
    linear-gradient(#ddd, #ddd) center / 100% 1px no-repeat;
  appearance: none;
}

input[type="range"]::-webkit-slider-thumb {
  width: 6px;
  height: 12px;
  background-color: #fff;
  appearance: none;
}

.percent {
  margin: 0 14px 0 9px;
}
```
